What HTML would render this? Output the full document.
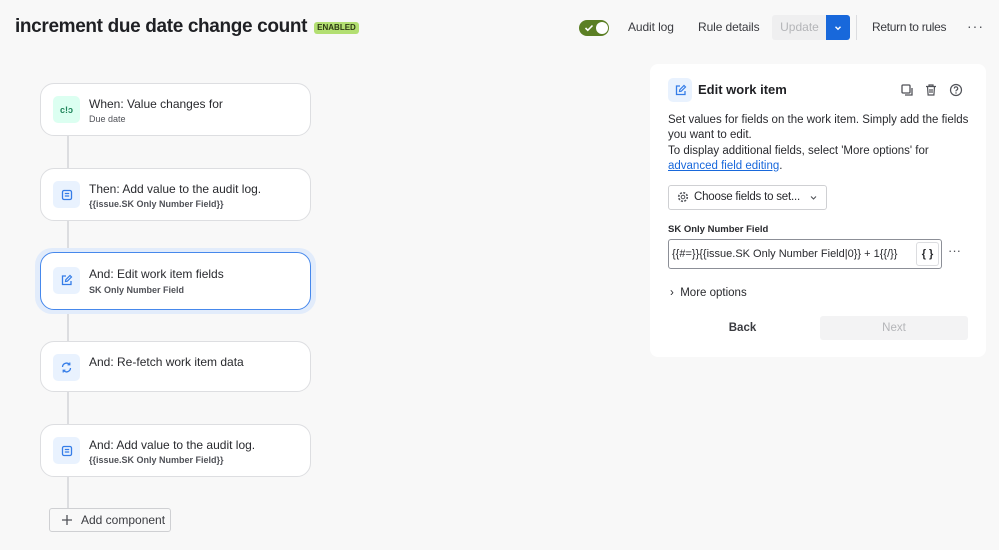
<!DOCTYPE html>
<html><head><meta charset="utf-8"><style>
*{box-sizing:border-box;margin:0;padding:0}
body{width:999px;height:550px;background:#f8f8f8;font-family:"Liberation Sans",sans-serif;color:#292a2e;position:relative;overflow:hidden}
.a{position:absolute}
h1{position:absolute;left:15px;top:16px;font-size:19px;font-weight:bold;letter-spacing:-0.35px;color:#1f2024;white-space:nowrap}
.badge{left:314px;top:22px;width:45px;height:12px;background:#b3df72;border-radius:3px;font-size:8px;font-weight:bold;text-align:center;line-height:12px;color:#2d3a12}
.line{left:67px;width:2px;background:#dcdde0}
.card{position:absolute;left:40px;width:271px;background:#fff;border:1px solid #dddee1;border-radius:14px}
.card .ic{position:absolute;left:12px;top:12px;width:27px;height:27px;border-radius:5px;background:#e9f2fe;display:flex;align-items:center;justify-content:center}
.card .t{position:absolute;left:48px;top:13px;font-size:12px;color:#292a2e}
.card .s{position:absolute;left:48px;top:30px;font-size:9px;color:#505258}
.card .s.b{font-weight:bold}
.nav{font-size:12px;color:#3a3b40;top:20px;letter-spacing:-0.1px}
</style></head><body>
<h1>increment due date change count</h1>
<div class="a badge">ENABLED</div>

<div class="a" style="left:579px;top:20px;width:30px;height:16px;border-radius:8px;background:#5b7f24"></div>
<div class="a" style="left:596px;top:22px;width:12px;height:12px;border-radius:6px;background:#fff"></div>
<svg class="a" style="left:584px;top:23px" width="10" height="10" viewBox="0 0 10 10"><path d="M1.5 5l2.3 2.3L8.5 2.5" stroke="#fff" stroke-width="1.6" fill="none"/></svg>
<div class="a nav" style="left:628px">Audit log</div>
<div class="a nav" style="left:698px">Rule details</div>
<div class="a" style="left:772px;top:15px;width:55px;height:25px;background:#efeff0;border-radius:3px 0 0 3px;font-size:12px;color:#b4b5b8;text-align:center;line-height:25px">Update</div>
<div class="a" style="left:826px;top:15px;width:24px;height:25px;background:#1868db;border-radius:0 3px 3px 0"></div>
<svg class="a" style="left:833px;top:23px" width="10" height="10" viewBox="0 0 10 10"><path d="M2.5 3.8L5 6.3 7.5 3.8" stroke="#fff" stroke-width="1.4" fill="none"/></svg>
<div class="a" style="left:856px;top:15px;width:1px;height:25px;background:#dcdde0"></div>
<div class="a nav" style="left:872px;letter-spacing:-0.3px">Return to rules</div>
<div class="a" style="left:967px;top:18px;font-size:14px;color:#505258;letter-spacing:1px">···</div>

<div class="a line" style="top:136px;height:373px"></div>

<div class="card" style="top:83px;height:53px"><div class="ic" style="background:#dcfff1"><span style="font-size:9px;color:#1f845a;font-weight:bold">c!ↄ</span></div><div class="t">When: Value changes for</div><div class="s">Due date</div></div>
<div class="card" style="top:168px;height:53px"><div class="ic"><svg width="12" height="12" viewBox="0 0 12 12"><rect x="1.5" y="1.5" width="9" height="9" rx="1.5" stroke="#357de8" stroke-width="1.3" fill="none"/><path d="M3.8 4.5h4.4M3.8 7h4.4" stroke="#357de8" stroke-width="1.2"/></svg></div><div class="t">Then: Add value to the audit log.</div><div class="s b">{{issue.SK Only Number Field}}</div></div>
<div class="a" style="left:35px;top:248px;width:281px;height:66px;border-radius:17px;background:#e2ecfb"></div>
<div class="card" style="top:252px;height:58px;border:1.5px solid #4688ec"><div class="ic" style="top:14px"><svg width="13" height="13" viewBox="0 0 13 13"><path d="M6 2H2.5v8.5H11V7" stroke="#357de8" stroke-width="1.3" fill="none"/><path d="M5.5 7.5l.3-1.8L10 1.5l1.5 1.5-4.2 4.2z" stroke="#357de8" stroke-width="1.2" fill="none"/></svg></div><div class="t" style="top:14px">And: Edit work item fields</div><div class="s b" style="top:32px">SK Only Number Field</div></div>
<div class="card" style="top:341px;height:51px"><div class="ic"><svg width="13" height="13" viewBox="0 0 13 13"><path d="M2.5 6a4 4 0 0 1 7-2.5M10.5 7a4 4 0 0 1-7 2.5" stroke="#357de8" stroke-width="1.3" fill="none"/><path d="M9.8 1.5v2.3H7.5M3.2 11.5V9.2h2.3" stroke="#357de8" stroke-width="1.2" fill="none"/></svg></div><div class="t">And: Re-fetch work item data</div></div>
<div class="card" style="top:424px;height:53px"><div class="ic"><svg width="12" height="12" viewBox="0 0 12 12"><rect x="1.5" y="1.5" width="9" height="9" rx="1.5" stroke="#357de8" stroke-width="1.3" fill="none"/><path d="M3.8 4.5h4.4M3.8 7h4.4" stroke="#357de8" stroke-width="1.2"/></svg></div><div class="t">And: Add value to the audit log.</div><div class="s b">{{issue.SK Only Number Field}}</div></div>

<div class="a" style="left:49px;top:508px;width:122px;height:24px;background:#f8f8f8;border:1px solid #cfd0d3;border-radius:3px;font-size:12px;line-height:22px;padding-left:31px;color:#3a3b40">Add component</div>
<svg class="a" style="left:61px;top:514px" width="12" height="12" viewBox="0 0 12 12"><path d="M6 1v10M1 6h10" stroke="#505258" stroke-width="1.3"/></svg>

<div class="a" style="left:650px;top:64px;width:336px;height:293px;background:#fff;border-radius:8px"></div>
<div class="a" style="left:668px;top:78px;width:24px;height:24px;border-radius:5px;background:#e9f2fe"></div>
<svg class="a" style="left:674px;top:84px" width="13" height="13" viewBox="0 0 13 13"><path d="M6 2H2.5v8.5H11V7" stroke="#357de8" stroke-width="1.3" fill="none"/><path d="M5.5 7.5l.3-1.8L10 1.5l1.5 1.5-4.2 4.2z" stroke="#357de8" stroke-width="1.2" fill="none"/></svg>
<div class="a" style="left:698px;top:82px;font-size:13px;font-weight:bold;color:#1f2024">Edit work item</div>
<svg class="a" style="left:900px;top:83px" width="14" height="14" viewBox="0 0 14 14"><rect x="2" y="2" width="8" height="8" rx="1" stroke="#505258" stroke-width="1.3" fill="none"/><path d="M5 12h7V5" stroke="#505258" stroke-width="1.3" fill="none"/></svg>
<svg class="a" style="left:924px;top:83px" width="14" height="14" viewBox="0 0 14 14"><path d="M2 3.5h10M5 3.5V2h4v1.5M3.5 3.5l.6 8.5h5.8l.6-8.5M6 6v4M8 6v4" stroke="#505258" stroke-width="1.2" fill="none"/></svg>
<svg class="a" style="left:949px;top:83px" width="14" height="14" viewBox="0 0 14 14"><circle cx="7" cy="7" r="5.5" stroke="#505258" stroke-width="1.2" fill="none"/><path d="M5.3 5.5a1.7 1.7 0 1 1 2.3 1.6c-.4.2-.6.5-.6.9v.4" stroke="#505258" stroke-width="1.2" fill="none"/><circle cx="7" cy="10" r=".7" fill="#505258"/></svg>
<div class="a" style="left:668px;top:113px;width:305px;font-size:11.5px;line-height:15.3px;color:#292a2e">Set values for fields on the work item. Simply add the fields you want to edit.<br>To display additional fields, select 'More options' for <span style="color:#1868db;text-decoration:underline">advanced field editing</span>.</div>
<div class="a" style="left:668px;top:185px;width:159px;height:25px;border:1px solid #cfd0d3;border-radius:3px;font-size:11.5px;line-height:23px;padding-left:25px;color:#292a2e;letter-spacing:-0.2px">Choose fields to set...</div>
<svg class="a" style="left:809px;top:193px" width="9" height="9" viewBox="0 0 9 9"><path d="M2 3.5L4.5 6 7 3.5" stroke="#505258" stroke-width="1.1" fill="none"/></svg>
<svg class="a" style="left:677px;top:191px" width="12" height="12" viewBox="0 0 12 12"><circle cx="6" cy="6" r="1.8" stroke="#505258" fill="none"/><circle cx="6" cy="6" r="4.3" stroke="#505258" stroke-dasharray="2 1.4" stroke-width="1.6" fill="none"/></svg>
<div class="a" style="left:668px;top:224px;font-size:9.5px;font-weight:bold;color:#292a2e">SK Only Number Field</div>
<div class="a" style="left:668px;top:239px;width:274px;height:30px;border:1px solid #8c8f97;border-radius:3px;font-size:11px;line-height:28px;padding-left:3px;color:#292a2e;white-space:nowrap">{{#=}}{{issue.SK Only Number Field|0}} + 1{{/}}</div>
<div class="a" style="left:916px;top:242px;width:23px;height:24px;border:1px solid #dcdde0;border-radius:3px;font-size:11px;font-weight:bold;text-align:center;line-height:22px;background:#fff">{ }</div>
<div class="a" style="left:948px;top:243px;font-size:13px;color:#505258">···</div>
<div class="a" style="left:670px;top:287px;font-size:11.5px;color:#292a2e">›&nbsp; More options</div>
<div class="a" style="left:668px;top:316px;width:149px;height:24px;font-size:11.5px;line-height:24px;text-align:center;font-weight:bold;color:#3a3b40">Back</div>
<div class="a" style="left:820px;top:316px;width:148px;height:24px;background:#f3f3f4;border-radius:3px;font-size:11.5px;line-height:24px;text-align:center;color:#b4b5b8">Next</div>
</body></html>
